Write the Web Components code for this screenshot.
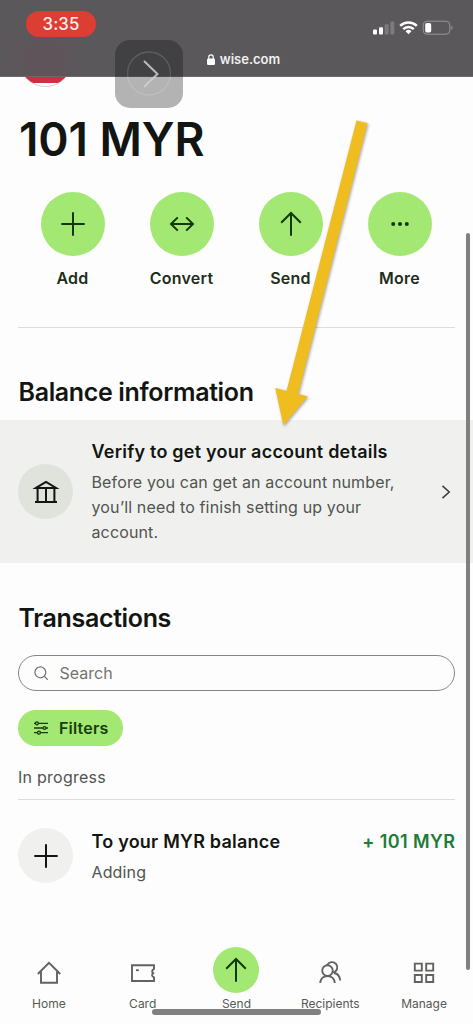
<!DOCTYPE html>
<html lang="en">
<head>
<meta charset="utf-8">
<meta name="viewport" content="width=device-width">
<title>Balance</title>
<style>
body{margin:0;background:#fdfdfd;font-family:Inter,"Liberation Sans",sans-serif;color:#121511}
</style>
</head>
<body>
<wise-app></wise-app>
<script>
const ICONS={
plus:'<path d="M12 0.3v23.4M0.3 12h23.4"/>',
swap:'<path d="M1 12h22M7.8 5.4L1 12l6.800 6.600M16.200 5.400L23 12l-6.800 6.600"/>',
up:'<path d="M12 23.700V1M2.200 10.800L12 1l9.800 9.800"/>',
dots:'<g fill="currentColor" stroke="none"><circle cx="5.200" cy="12" r="2"/><circle cx="12" cy="12" r="2"/><circle cx="18.800" cy="12" r="2"/></g>',
bank:'<path d="M1 22h22M2 7.900L12 1.900l10 6zM3.600 8v14M12 8v14M20.400 8v14"/>',
home:'<path d="M.8 13L12 1.900 23.200 13M4 10.400v11.300h16V10.400"/>',
card:'<path d="M1 4.200h22v3.600c-2.300 1.300-2.300 3.200-.8 4.400-1.800 1.300-1.500 3.300.8 4.200v3.600H1z"/><path d="M5 9.200h2.800"/>',
people:'<circle cx="9.500" cy="9.600" r="5.300"/><path d="M9.200 4.300A5.300 5.300 0 1 1 15.200 11.600M2.200 22c.3-4 3.200-7 7.300-7s7 3 7.300 7M16 12c3.600.5 5.800 3.400 6.200 7.500"/>',
grid:'<path d="M2.800 2.600h7v7h-7zM14.200 2.600h7v7h-7zM2.800 14h7v7h-7zM14.200 14h7v7h-7z"/>',
search:'<circle cx="10.500" cy="10.500" r="9"/><path d="M17 17l6 6"/>',
filter:'<path d="M0 4h2.500M7.500 4H24M0 12h15.500M20.500 12H24M0 20h6M11 20h13"/><circle cx="5" cy="4" r="2.500"/><circle cx="18" cy="12" r="2.500"/><circle cx="8.500" cy="20" r="2.500"/>',
right:'<path d="M6 1.500L17.500 12 6 22.500"/>'
};
function define(name,render){
  customElements.define(name,class extends HTMLElement{
    constructor(){super();this.attachShadow({mode:'open'})}
    connectedCallback(){this.shadowRoot.innerHTML=render(this)}
  });
}
const at=(el,n,d='')=>el.getAttribute(n)||d;

define('w-icon',el=>`<style>:host{display:block;flex:none;width:${at(el,'size',24)}px;height:${at(el,'size',24)}px}svg{display:block;width:100%;height:100%;overflow:visible}</style>
<svg viewBox="0 0 24 24" fill="none" stroke="currentColor" stroke-width="${at(el,'weight',1.8)}">${ICONS[at(el,'name')]}</svg>`);

define('status-header',()=>`<style>
:host{display:flex;flex-direction:column;position:relative;z-index:2;height:77px;box-sizing:border-box;border-bottom:1px solid #6b696c;color:#fff;background:radial-gradient(circle at 45px 62px,rgba(105,75,84,.4),rgba(105,75,84,0) 48px),#5a585b}
.top{display:flex;justify-content:space-between;align-items:center;height:26px;padding:11px 19px 0 26px}
.time{width:70px;height:26px;border-radius:13px;background:#dc3e33;text-align:center;font:500 16.800px/27px Inter,sans-serif;letter-spacing:.1px;color:#fbeeee}
.sys{display:block;margin-top:8px}
.url{display:flex;align-items:center;justify-content:center;gap:5px;height:18px;margin-top:13px;padding-left:14px;font:600 13px/18px Inter,sans-serif;color:#f0f0f0}
</style>
<div class="top"><div class="time">3:35</div>
<svg class="sys" width="82" height="16" viewBox="0 0 82 16"><g fill="#fff"><rect x="1" y="9.500" width="4" height="5" rx="1"/><rect x="7" y="7.200" width="4" height="7.300" rx="1"/><g fill="#7c7a7d"><rect x="12.700" y="4.200" width="4" height="10.300" rx="1"/><rect x="18.300" y="1.500" width="4" height="13" rx="1"/></g></g>
<g fill="none" stroke="#fff" stroke-width="2.500"><path d="M28.200 5.800a12 12 0 0 1 16.600 0M31.200 9.200a7.600 7.600 0 0 1 10.600 0"/></g><path d="M36.500 14.200l-3-2.900a4.300 4.300 0 0 1 6 0z" fill="#fff"/>
<rect x="51.200" y="1.200" width="26.600" height="13" rx="3.800" fill="none" stroke="#98969a"/><path d="M79.300 5.500c1.700.8 1.700 3.600 0 4.400z" fill="#98969a"/><rect x="53.200" y="3" width="6" height="9.500" rx="1.700" fill="#fff"/></svg></div>
<div class="url"><svg width="8" height="11" viewBox="0 0 8 11"><rect y="4.500" width="8" height="6.500" rx="1.200" fill="#fff"/><path d="M1.800 5V3a2.200 2.200 0 0 1 4.400 0v2" fill="none" stroke="#fff" stroke-width="1.200"/></svg><span>wise.com</span></div>`);

define('assistive-button',()=>`<style>:host{position:absolute;z-index:3;left:115px;top:40px;width:68px;height:68px;border-radius:15px;background:rgba(10,10,10,.3)}svg{display:block}</style>
<svg width="68" height="68" fill="none"><circle cx="34" cy="33.500" r="21.500" stroke="#fff" stroke-opacity=".15" stroke-width="1.300"/><path d="M29 21l13.500 13L29 47" stroke="#d0d0d0" stroke-opacity=".85" stroke-width="2"/></svg>`);

define('account-flag',()=>`<style>:host{position:absolute;left:18px;top:32px;width:55px;height:55px;box-sizing:border-box;border:1px solid #cfcfcf;border-radius:50%;background:linear-gradient(#cf2f45 49.500px,#fff 50px)}</style>`);

define('quick-action',el=>`<style>:host{display:flex;flex-direction:column;align-items:center;width:109px}
.c{display:grid;place-items:center;width:64px;height:64px;border-radius:50%;background:#a2e872;color:#12380b}
span{margin-top:10px;font:600 16px/24px Inter,sans-serif;letter-spacing:.25px;color:#1f2e1b}</style>
<div class="c"><w-icon name="${at(el,'icon')}" size="24" weight="2"></w-icon></div><span><slot></slot></span>`);

define('section-title',()=>`<style>:host{display:block;font-weight:600;font-size:25px;line-height:32px;letter-spacing:-.35px;color:#121511}</style><slot></slot>`);

define('list-row',el=>`<style>:host{display:flex;align-items:flex-start;box-sizing:border-box;padding:0 18px}
.av{display:grid;place-items:center;flex:none;width:55px;height:55px;margin-right:18.500px;border-radius:50%;background:var(--avatar,#f0f1ef)}
.av,.go{margin-top:var(--drop,0)}
.b{flex:1;min-width:0;padding-top:var(--text-top,0)}
.t{font-weight:600;font-size:18px;line-height:24px;letter-spacing:.23px;display:flex;justify-content:space-between;white-space:nowrap}
.d{font-size:16px;line-height:25.200px;letter-spacing:.14px;color:#51544f;margin-top:6px;padding-right:32px}
.amt{color:#1c7c36;letter-spacing:.42px;margin-right:-.4px}
.go{color:#3a3d38}</style>
<div class="av"><w-icon name="${at(el,'icon')}" weight="2"></w-icon></div>
<div class="b"><div class="t"><slot name="title"></slot><span class="amt"><slot name="amount"></slot></span></div><div class="d"><slot></slot></div></div>
<div class="go"><slot name="action"></slot></div>`);

define('search-box',()=>`<style>:host{display:flex;align-items:center;box-sizing:border-box;height:36px;padding-left:15px;border:1px solid #858784;border-radius:18px;color:#72756f;font-size:16px;letter-spacing:0}w-icon{margin-right:11px}</style><w-icon name="search" size="14.500" weight="2"></w-icon><slot></slot>`);

define('filter-button',()=>`<style>:host{display:flex;align-items:center;width:105px;height:36px;box-sizing:border-box;padding-left:16px;border-radius:18px;background:#a2e872;color:#173d10;font-weight:600;font-size:16px;letter-spacing:.2px}w-icon{margin-right:11px}</style><w-icon name="filter" size="14" weight="2.200"></w-icon><slot></slot>`);

define('nav-item',el=>{const s=el.hasAttribute('primary');return `<style>:host{display:flex;flex-direction:column;align-items:center;flex:1;font-size:12px;line-height:16px;letter-spacing:0;color:#565955}
.i{display:grid;place-items:center;width:46px;height:46px;border-radius:50%;${s?'background:#a2e872;color:#12380b':'color:#60635f;box-sizing:border-box;padding-top:5px'}}
span{margin-top:2.500px}</style><div class="i"><w-icon name="${at(el,'icon')}" weight="${s?2:1.9}"></w-icon></div><span><slot></slot></span>`});

define('pointer-arrow',()=>`<style>:host{position:absolute;z-index:4;left:265px;top:110px;pointer-events:none}svg{display:block;filter:drop-shadow(1px 1.500px 1.500px rgba(0,0,0,.35))}</style>
<svg width="115" height="325" viewBox="265 110 115 325"><path d="M356.500 120.500L367.500 123.300 298.200 394 307.800 396.500 283.300 425.500 275.300 388 286.500 391z" fill="#efbd20"/></svg>`);

define('wise-app',()=>`<style>
:host{display:block;position:relative;width:473px;height:1024px;overflow:hidden}
main{display:flex;flex-direction:column}
.balance{margin:34px 18px 0 19px;font-weight:600;font-size:46px;line-height:56px;letter-spacing:-.1px}
.actions{display:flex;margin:25px 18px 0}
hr{width:437px;height:1px;border:0;margin:0 18px;background:#dcdddb}
section-title{margin-left:18.500px}
.verify{height:143px;margin-top:12px;background:#f0f1ef;--avatar:#dfe3dc;--drop:44px;--text-top:20px}
.verify w-icon{color:#3a3d38;margin:20.500px 2px 0 -2px}
search-box{margin:21px 18px 0}
filter-button{margin:19px 18px 0}
.label{margin:19px 18px 10px;font-size:16px;line-height:24px;letter-spacing:.25px;color:#51544f}
nav{display:flex;padding:0 2px;margin-top:62px}
.scroll{position:absolute;z-index:5;left:466px;top:233px;width:3.500px;height:737px;border-radius:2px;background:#808080}
.bar{position:absolute;z-index:5;left:152px;top:1009px;width:169px;height:5.500px;border-radius:3px;background:#808080}
</style>
<account-flag></account-flag>
<status-header></status-header>
<assistive-button></assistive-button>
<main>
<div class="balance">101 MYR</div>
<div class="actions"><quick-action icon="plus">Add</quick-action><quick-action icon="swap">Convert</quick-action><quick-action icon="up">Send</quick-action><quick-action icon="dots">More</quick-action></div>
<hr style="margin-top:37px">
<section-title style="margin-top:48px">Balance information</section-title>
<list-row class="verify" icon="bank"><span slot="title">Verify to get your account details</span>Before you can get an account number, you’ll need to finish setting up your account.<w-icon slot="action" name="right" size="14" weight="2.600"></w-icon></list-row>
<section-title style="margin-top:39px">Transactions</section-title>
<search-box>Search</search-box>
<filter-button>Filters</filter-button>
<div class="label">In progress</div>
<hr>
<list-row icon="plus" style="margin-top:28px;--text-top:2px"><span slot="title">To your MYR balance</span><span slot="amount">+ 101 MYR</span>Adding</list-row>
<nav><nav-item icon="home">Home</nav-item><nav-item icon="card">Card</nav-item><nav-item icon="up" primary>Send</nav-item><nav-item icon="people">Recipients</nav-item><nav-item icon="grid">Manage</nav-item></nav>
</main>
<pointer-arrow></pointer-arrow>
<div class="scroll"></div><div class="bar"></div>`);
</script>
</body>
</html>
